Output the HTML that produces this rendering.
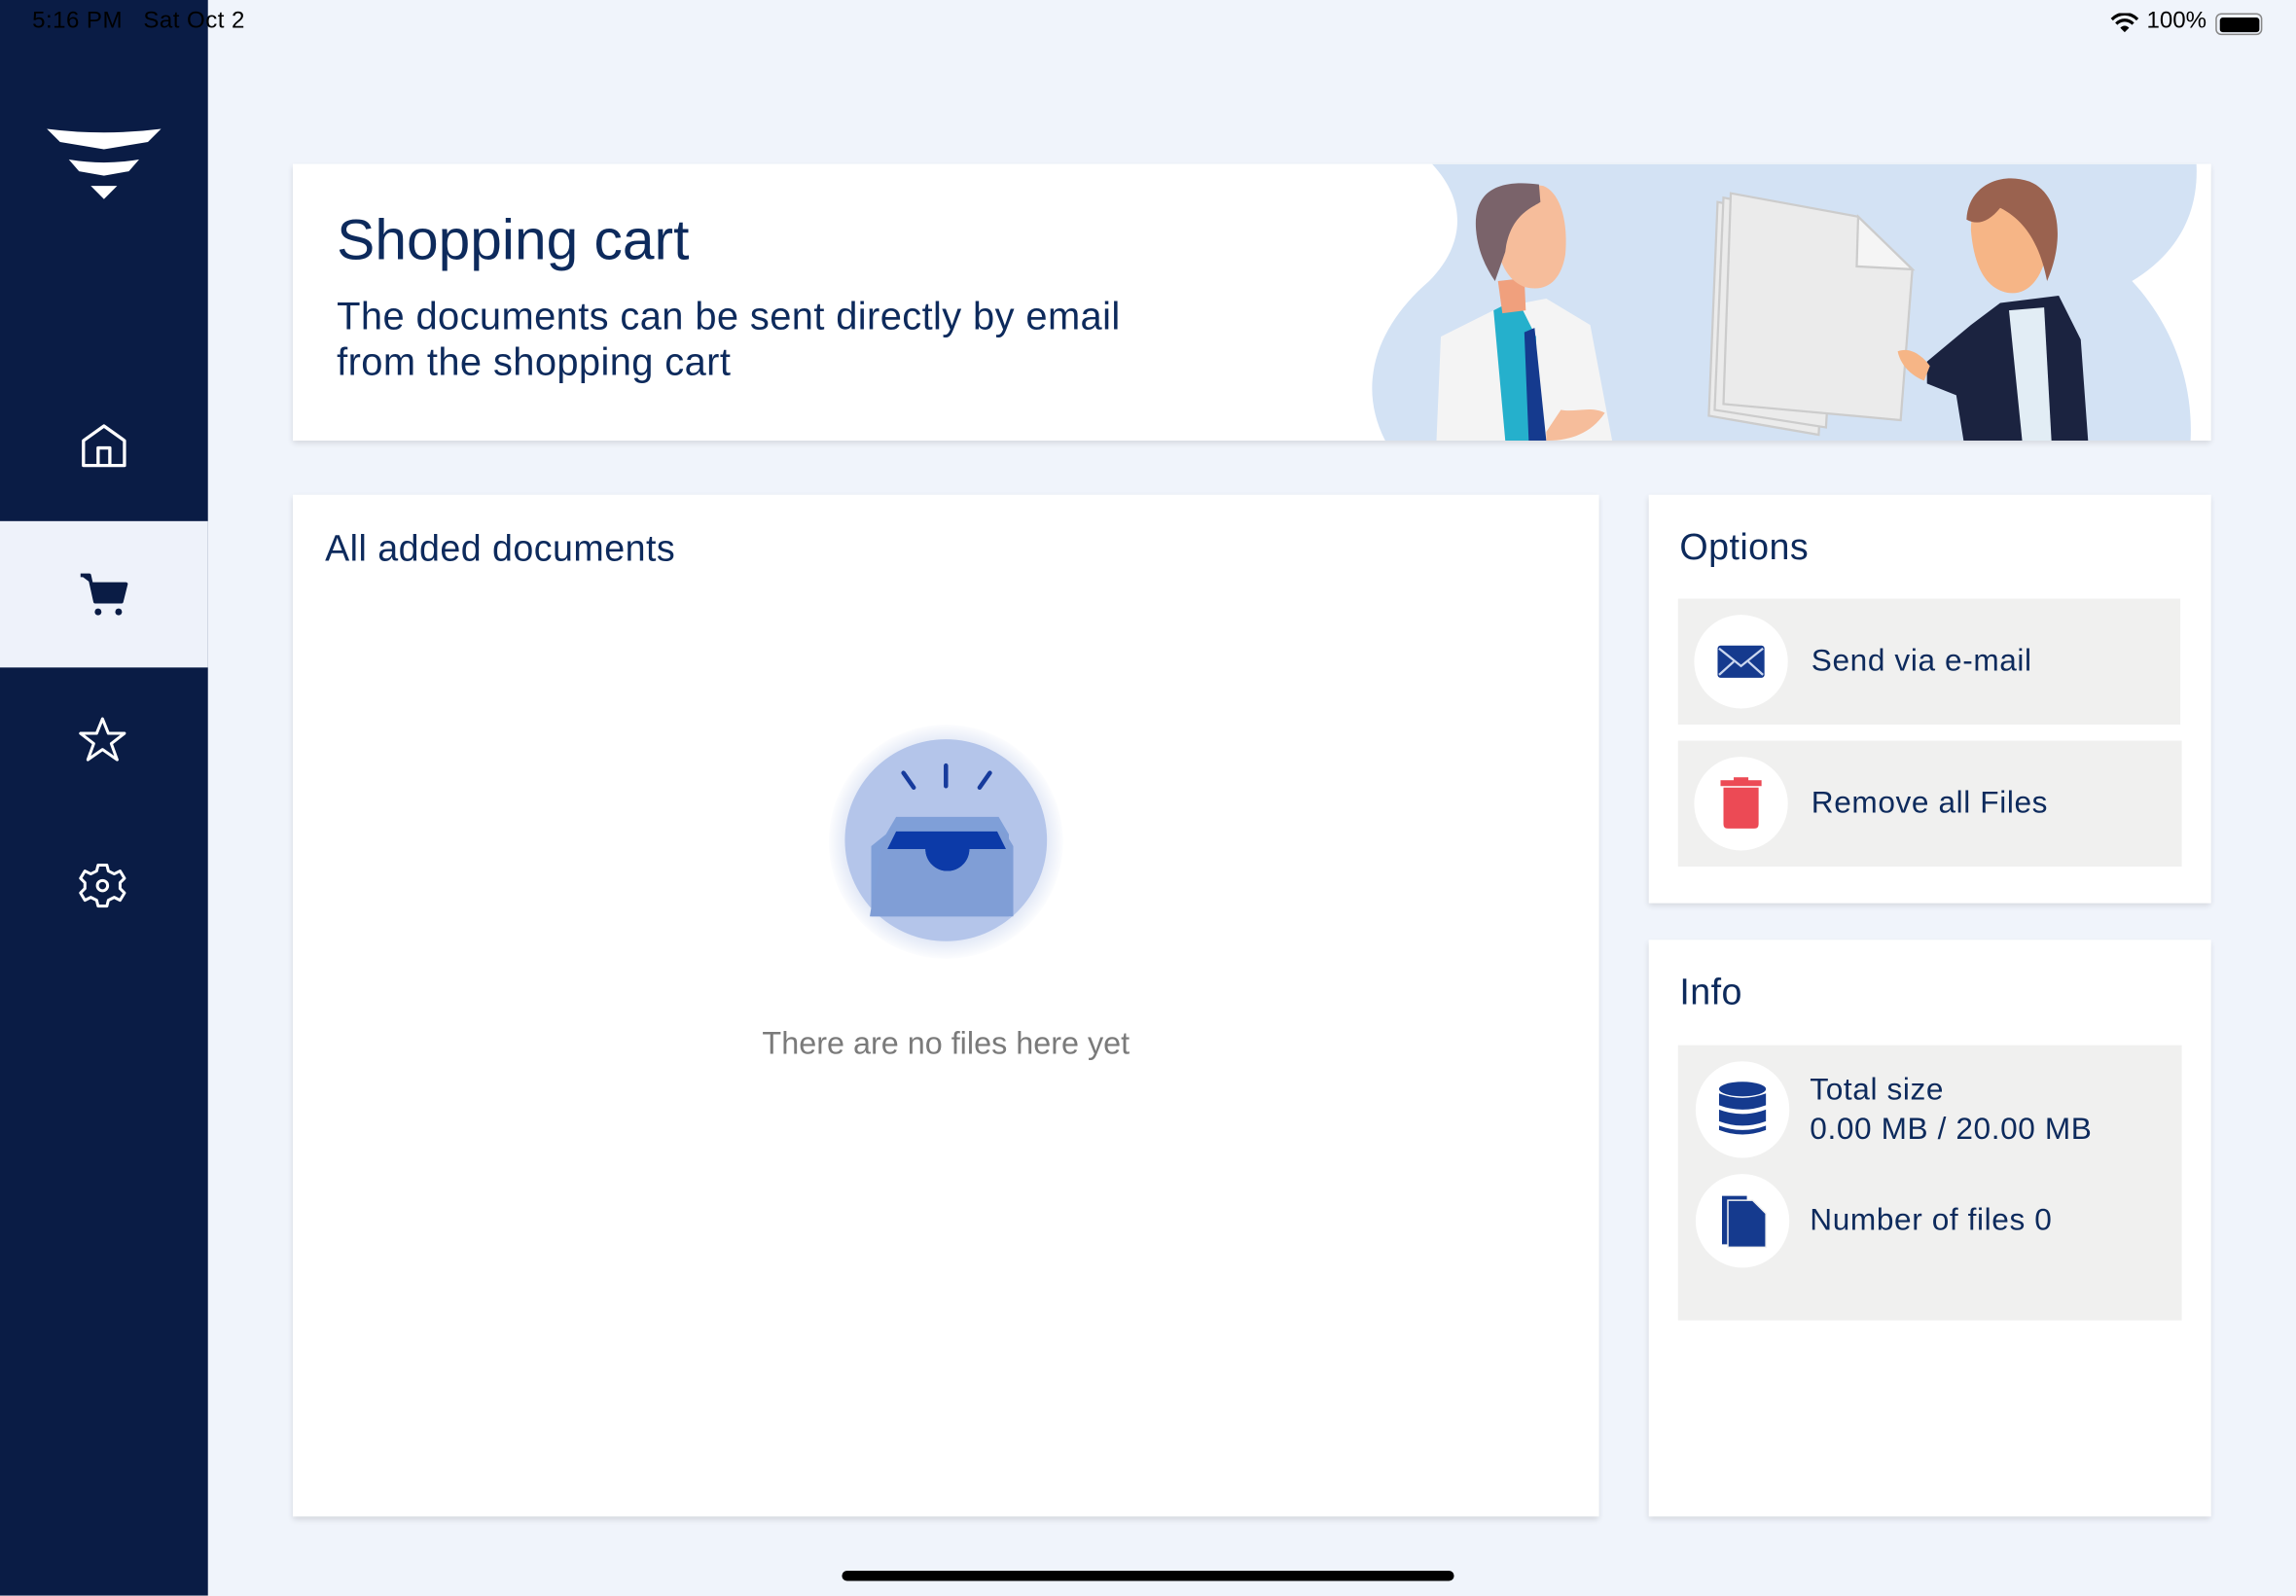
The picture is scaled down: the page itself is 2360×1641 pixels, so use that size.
<!DOCTYPE html>
<html><head><meta charset="utf-8"><style>
html,body{margin:0;padding:0;width:2360px;height:1640px;overflow:hidden;background:#f0f4fb}
#s{position:absolute;left:0;top:0;width:1568px;height:1090px;transform:scale(1.50510);transform-origin:0 0;font-family:"Liberation Sans",Arial,sans-serif;color:#0d2a5c}
.abs{position:absolute}
.card{position:absolute;background:#fff;box-shadow:0 2px 4px rgba(0,0,0,.12)}
.row{position:absolute;background:#f0f0ef}
.circ{position:absolute;width:64px;height:64px;border-radius:50%;background:#fff;display:flex;align-items:center;justify-content:center}
.lbl{position:absolute;font-size:21px;color:#0d2a5c;letter-spacing:0.4px}
</style></head><body><div id="s">
<div class="abs" style="left:0;top:0;width:142px;height:1090px;background:#0a1c45"></div>
<div class="abs" style="left:0;top:356px;width:142px;height:100px;background:#eef2fa"></div>
<div class="abs" style="left:22px;top:6px;font-size:16px;color:#000;letter-spacing:0.3px">5:16 PM&nbsp;&nbsp;&nbsp;Sat Oct 2</div>
<div class="abs" style="left:1466px;top:6px;font-size:16px;color:#000">100%</div>
<svg class="abs" style="left:1441px;top:9px" width="20" height="14" viewBox="0 0 20 14"><path d="M10 13 L7 10 A4 4 0 0 1 13 10Z M3.5 6.5 A9 9 0 0 1 16.5 6.5 L15 8 A7 7 0 0 0 5 8Z M0.5 3.5 A13 13 0 0 1 19.5 3.5 L18 5 A11 11 0 0 0 2 5Z" fill="#000"/></svg>
<div class="abs" style="left:1513px;top:9px;width:30px;height:13px;border:1px solid #888;border-radius:4px"><div style="margin:1.5px;width:27px;height:10px;background:#000;border-radius:2px"></div></div>
<svg class="abs" style="left:30px;top:85px" width="82" height="65" viewBox="0 0 82 65"><path d="M2 3 Q41 8 80 3 L71 12 L41 17 L11 12Z" fill="#fff"/><path d="M41 12 L41 17Z" fill="#fff"/><path d="M17 24 Q41 28 65 24 L58 32 L41 35 L24 32Z" fill="#fff"/><path d="M32 42 L50 42 L41 51Z" fill="#fff"/></svg>
<svg class="abs" style="left:54px;top:287px" width="34" height="34" viewBox="0 0 34 34"><path d="M3 14 L17 4 L31 14 V31 H3Z M13 31 V19 H21 V31" fill="none" stroke="#fff" stroke-width="2.2" stroke-linejoin="round"/></svg>
<svg class="abs" style="left:52px;top:388px" width="38" height="36" viewBox="0 0 38 36"><path d="M3 5 H9 L13 23 H31 L34 11 H11" fill="#0a1c45" stroke="#0a1c45" stroke-width="2.5" stroke-linejoin="round"/><path d="M11 11 H34 L31 23 H13Z" fill="#0a1c45"/><circle cx="15" cy="30" r="2.3" fill="#0a1c45"/><circle cx="29" cy="30" r="2.3" fill="#0a1c45"/></svg>
<svg class="abs" style="left:52px;top:488px" width="36" height="36" viewBox="0 0 36 36"><path d="M18 3 L22 13 L33 13 L24 20 L28 31 L18 24 L8 31 L12 20 L3 13 L14 13Z" fill="none" stroke="#fff" stroke-width="2" stroke-linejoin="round"/></svg>
<svg class="abs" style="left:52px;top:587px" width="36" height="36" viewBox="0 0 36 36"><path d="M15 4 H21 L22 8 L26 10 L30 8 L33 13 L30 16 V20 L33 23 L30 28 L26 26 L22 28 L21 32 H15 L14 28 L10 26 L6 28 L3 23 L6 20 V16 L3 13 L6 8 L10 10 L14 8Z" fill="none" stroke="#fff" stroke-width="2" stroke-linejoin="round"/><circle cx="18" cy="18" r="3.5" fill="none" stroke="#fff" stroke-width="2"/></svg>

<div class="card" style="left:200px;top:112px;width:1310px;height:189px;overflow:hidden">
<div class="abs" style="left:30px;top:31px;font-size:39px">Shopping cart</div>
<div class="abs" style="left:30px;top:89px;font-size:26.5px;line-height:31px;letter-spacing:0.25px">The documents can be sent directly by email<br>from the shopping cart</div>
<svg class="abs" style="left:736px;top:0" width="574" height="189" viewBox="0 0 574 189">
<path d="M42 0 H564 C566 40 545 65 520 80 C548 110 562 150 560 189 H10 C-10 150 5 110 40 80 C60 60 70 30 42 0Z" fill="#d3e2f4"/>
<path d="M45 189 L48 118 L88 98 L120 92 L150 110 L165 189Z" fill="#f4f4f4"/>
<path d="M84 100 L100 92 L113 118 L115 189 L92 189Z" fill="#25b0cc"/>
<path d="M105 115 L112 112 L120 189 L108 189Z" fill="#153a8e"/>
<path d="M87 80 L105 78 L106 100 L90 102Z" fill="#f0a07d"/>
<path d="M85 50 C85 15 100 12 118 15 C130 20 135 40 133 62 C130 80 120 88 105 84 C95 80 88 70 85 50Z" fill="#f6bd9b"/>
<path d="M72 45 C70 20 85 10 115 14 L116 26 C110 30 95 35 92 60 L85 80 C78 70 73 58 72 45Z" fill="#7a636a"/>
<path d="M120 183 L130 168 C140 170 150 165 160 170 C150 185 135 189 120 189Z" fill="#f6bd9b"/>
<g fill="#ebebeb" stroke="#ccc" stroke-width="1.5"><path d="M237 26 L315 42 L306 185 L231 172Z"/><path d="M241 23 L320 39 L311 180 L235 168Z"/><path d="M246 20 L333 36 L370 72 L362 175 L241 164Z"/></g>
<path d="M333 36 L332 70 L370 72Z" fill="#f5f5f5" stroke="#ccc" stroke-width="1.5"/>
<path d="M380 135 L410 110 L430 95 L470 90 L485 120 L490 189 H405 L400 158 L380 150Z" fill="#1b2340"/>
<path d="M436 100 L460 98 L465 189 H445Z" fill="#e2edf5"/>
<path d="M360 128 C368 125 376 130 382 138 L378 148 C370 145 362 138 360 128Z" fill="#f6b586"/>
<path d="M410 45 C410 20 425 10 440 12 C460 15 466 35 462 60 C458 80 448 90 435 88 C420 85 412 70 410 45Z" fill="#f6b586"/>
<path d="M407 38 C408 15 430 5 450 12 C470 20 475 50 462 80 C458 60 450 40 430 30 C422 40 414 42 407 38Z" fill="#9a624f"/>
</svg></div>

<div class="card" style="left:200px;top:338px;width:892px;height:698px">
<div class="abs" style="left:22px;top:23px;font-size:25px;letter-spacing:0.3px">All added documents</div>
<div class="abs" style="left:366px;top:157px;width:160px;height:160px;border-radius:50%;background:radial-gradient(circle,rgba(140,165,220,.35) 55%,rgba(200,215,240,0) 72%)"></div>
<div class="abs" style="left:377px;top:167px;width:138px;height:138px;border-radius:50%;background:#b4c5ea"></div>
<svg class="abs" style="left:392px;top:180px" width="110" height="115" viewBox="0 0 110 115"><path d="M25 10 L32 20 M54 5 V19 M84 10 L77 20" stroke="#173b9c" stroke-width="3" stroke-linecap="round"/><path d="M13 52 L20 40 H90 L97 52 V108 H3 V60Z" fill="#7f9fd8"/><path d="M10 60 L16 50 H94 L100 60 V108 H2Z" fill="#809ed6"/><path d="M14 62 L20 50 H89 L95 62 H70 A15 15 0 0 1 40 62Z" fill="#0c3aa8"/><path d="M40 62 A15 15 0 0 0 70 62Z" fill="#0c3aa8"/></svg>
<div class="abs" style="left:0;width:892px;top:363px;text-align:center;font-size:21.5px;color:#7a7a7a">There are no files here yet</div>
</div>

<div class="card" style="left:1126px;top:338px;width:384px;height:279px">
<div class="abs" style="left:21px;top:22px;font-size:25px;letter-spacing:0.3px">Options</div>
<div class="row" style="left:20px;top:71px;width:343px;height:86px">
<div class="circ" style="left:11px;top:11px"><svg width="34" height="26" viewBox="0 0 34 26"><rect x="1" y="2" width="32" height="22" rx="2" fill="#153a8e"/><path d="M2 4 L17 16 L32 4 M2 22 L12 13 M32 22 L22 13" stroke="#cbd7ef" stroke-width="1.5" fill="none"/></svg></div>
<div class="lbl" style="left:91px;top:31px">Send via e-mail</div></div>
<div class="row" style="left:20px;top:168px;width:344px;height:86px">
<div class="circ" style="left:11px;top:11px"><svg width="30" height="38" viewBox="0 0 30 38"><rect x="1" y="3" width="28" height="4" fill="#ec4a55"/><rect x="10" y="1" width="10" height="4" fill="#ec4a55"/><path d="M3 8 H27 V33 Q27 36 24 36 H6 Q3 36 3 33Z" fill="#ec4a55"/></svg></div>
<div class="lbl" style="left:91px;top:31px">Remove all Files</div></div>
</div>

<div class="card" style="left:1126px;top:642px;width:384px;height:394px">
<div class="abs" style="left:21px;top:22px;font-size:25px;letter-spacing:0.3px">Info</div>
<div class="row" style="left:20px;top:72px;width:344px;height:188px">
<div class="circ" style="left:12px;top:11px;height:66px"><svg width="34" height="40" viewBox="0 0 34 40"><ellipse cx="17" cy="6" rx="16" ry="5" fill="#153a8e"/><path d="M1 9 Q17 15 33 9 V17 Q17 23 1 17Z M1 20 Q17 26 33 20 V28 Q17 34 1 28Z M1 31 Q17 37 33 31 V34 Q17 40 1 34Z" fill="#153a8e"/></svg></div>
<div class="lbl" style="left:90px;top:17px;line-height:27px">Total size<br>0.00 MB / 20.00 MB</div>
<div class="circ" style="left:12px;top:88px;height:64px"><svg width="34" height="40" viewBox="0 0 34 40"><path d="M3 3 H20 V36 H3Z" fill="#153a8e"/><path d="M7 6 H24 L33 15 V38 H7Z" fill="#153a8e" stroke="#f0f0f0" stroke-width="1"/></svg></div>
<div class="lbl" style="left:90px;top:108px">Number of files 0</div>
</div></div>

<div class="abs" style="left:575px;top:1073px;width:418px;height:7px;border-radius:4px;background:#000"></div>
</div></body></html>
